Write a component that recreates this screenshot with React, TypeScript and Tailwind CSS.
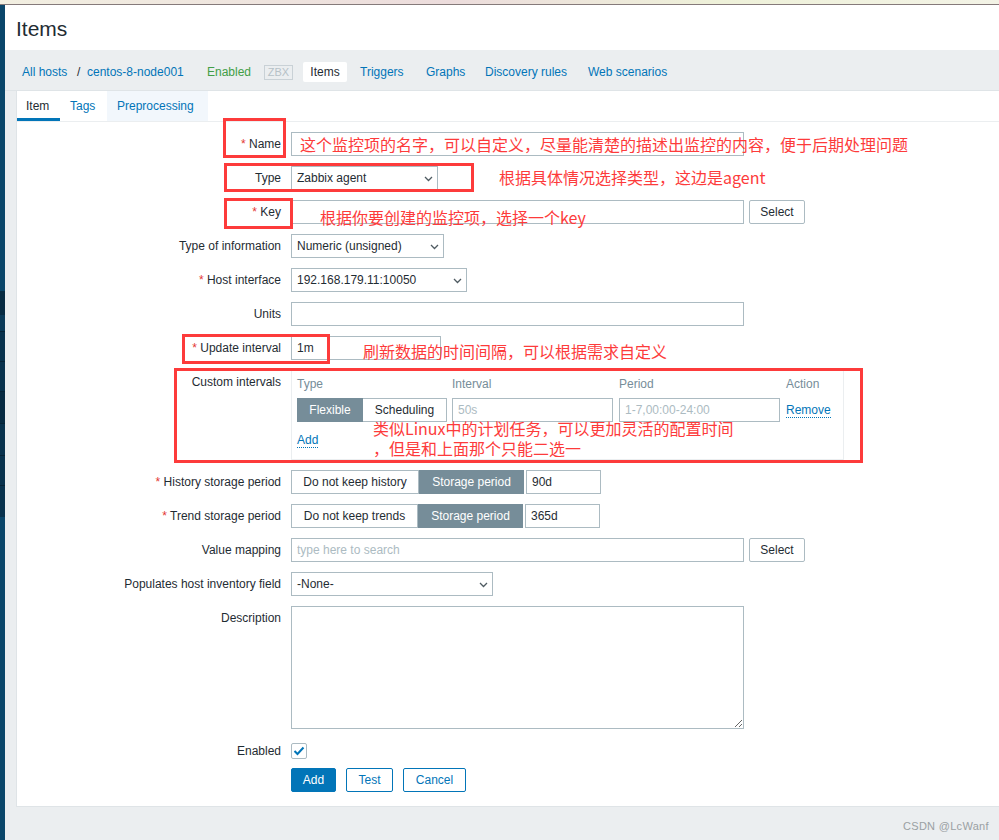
import React from 'react'

const RED = '#fd3b3b'

function Label({text, req}: {text: string, req?: boolean}) {
    return (
        <div className="w-[264px] shrink-0 h-6 leading-6 text-right">
            {req && <span className="text-[#e33734]">* </span>}
            {text}
        </div>
    )
}

function Row({label, req, children, className}: {label: string, req?: boolean, children?: React.ReactNode, className?: string}) {
    return (
        <div className={`flex items-start ${className ?? 'mb-[10px]'}`}>
            <Label text={label} req={req} />
            <div className="ml-[10px] flex items-start">{children}</div>
        </div>
    )
}

function Chevron() {
    return (
        <svg className="absolute right-[4px] top-[9px]" width="9" height="6" viewBox="0 0 9 6">
            <path d="M1 1 L4.5 4.5 L8 1" stroke="#4f5b62" strokeWidth="1.3" fill="none" />
        </svg>
    )
}

function Select({value, className}: {value: string, className: string}) {
    return (
        <div className={`relative h-6 border border-[#acbbc2] bg-white pl-[5px] leading-[22px] ${className}`}>
            {value}
            <Chevron />
        </div>
    )
}

function TextInput({value, placeholder, className}: {value?: string, placeholder?: string, className: string}) {
    return (
        <input
            readOnly
            defaultValue={value}
            placeholder={placeholder}
            className={`h-6 border border-[#acbbc2] bg-white px-[5px] outline-none placeholder:text-[#acbbc2] ${className}`}
        />
    )
}

function GreyButton({text}: {text: string}) {
    return (
        <div className="ml-[5px] w-[56px] h-6 leading-[22px] border border-[#acbbc2] bg-white rounded-[2px] text-center">
            {text}
        </div>
    )
}

export default function App() {
    return (
        <div className="relative w-[999px] h-[840px] overflow-hidden font-['Liberation_Sans',Arial,sans-serif] text-[12px] text-[#1f2c33]">
            <div className="h-[5px] border-b border-[#857a7a] bg-[linear-gradient(90deg,#f2efe1,#ecdcdc_45%,#eef1d9_72%,#f3f3e6)]" />
            <div className="flex h-[835px]">
                <div className="w-[5px] shrink-0 bg-[#0a466a] flex flex-col">
                    <div className="h-[286px]" />
                    <div className="h-[24px] bg-[#072b42]" />
                    <div className="h-[16px] bg-[#0a3a58]" />
                    <div className="h-[30px] bg-[#08324d] border-t border-[#052336]" />
                    <div className="h-[30px] bg-[#08324d] border-t border-[#052336]" />
                    <div className="h-[32px] bg-[#072b42] border-t border-[#052336]" />
                    <div className="h-[32px] bg-[#08324d] border-t border-[#052336]" />
                    <div className="h-[30px] bg-[#08324d] border-t border-[#052336]" />
                    <div className="h-[32px] bg-[#08324d] border-t border-[#052336]" />
                </div>
                <div className="flex-1 bg-[#ebeef0] flex flex-col">
                    <div className="h-[45px] bg-white pl-[11px] pt-[3px] flex items-center text-[21px]">Items</div>
                    <div className="h-[41px] border-b border-[#dfe4e7] flex items-center pl-[17px] pt-[4px] text-[#0275b8] whitespace-nowrap">
                        <span className="w-[55px] shrink-0">All hosts</span>
                        <span className="w-[10px] shrink-0 text-[#1f2c33]">/</span>
                        <span className="w-[120px] shrink-0">centos-8-node001</span>
                        <span className="w-[57px] shrink-0 text-[#429e47]">Enabled</span>
                        <span className="w-[29px] h-[15px] shrink-0 border border-[#c9d1d6] text-[#b6c1c7] text-[11px] leading-[13px] text-center">ZBX</span>
                        <span className="ml-[10px] w-[44px] h-[20px] leading-[20px] shrink-0 bg-white rounded-[2px] text-center text-[#1f2c33]">Items</span>
                        <span className="ml-[13px] w-[66px] shrink-0">Triggers</span>
                        <span className="w-[59px] shrink-0">Graphs</span>
                        <span className="w-[103px] shrink-0">Discovery rules</span>
                        <span>Web scenarios</span>
                    </div>
                    <div className="ml-[11px] h-[716px] bg-white border-l border-b border-[#dfe4e7] flex flex-col">
                        <div className="h-[31px] border-b border-[#ebeef0] flex whitespace-nowrap">
                            <div className="w-[43px] h-[30px] leading-[30px] pl-[9px] shadow-[inset_0_-3px_0_#0275b8]">Item</div>
                            <div className="w-[47px] h-[30px] leading-[30px] pl-[10px] text-[#0275b8]">Tags</div>
                            <div className="w-[101px] h-[30px] leading-[30px] pl-[10px] text-[#0275b8] bg-[#f2f7fc]">Preprocessing</div>
                        </div>
                        <div className="pt-[10px] flex flex-col">
                            <Row label="Name" req>
                                <TextInput className="w-[453px]" />
                            </Row>
                            <Row label="Type">
                                <Select value="Zabbix agent" className="w-[147px]" />
                            </Row>
                            <Row label="Key" req>
                                <TextInput className="w-[453px]" />
                                <GreyButton text="Select" />
                            </Row>
                            <Row label="Type of information">
                                <Select value="Numeric (unsigned)" className="w-[153px]" />
                            </Row>
                            <Row label="Host interface" req>
                                <Select value="192.168.179.11:10050" className="w-[176px]" />
                            </Row>
                            <Row label="Units">
                                <TextInput className="w-[453px]" />
                            </Row>
                            <Row label="Update interval" req>
                                <TextInput value="1m" className="w-[150px]" />
                            </Row>
                            <Row label="Custom intervals">
                                <div className="w-[553px] h-[90px] border border-[#ebeef0] px-[5px] pt-[5px]">
                                    <div className="flex h-[16px] leading-[16px] text-[#768d99]">
                                        <div className="w-[150px]">Type</div>
                                        <div className="ml-[5px] w-[161px]">Interval</div>
                                        <div className="ml-[6px] w-[161px]">Period</div>
                                        <div className="ml-[6px]">Action</div>
                                    </div>
                                    <div className="flex mt-[6px] h-6">
                                        <div className="w-[150px] flex">
                                            <div className="w-[66px] h-6 leading-[22px] text-center bg-[#768d99] border border-[#768d99] text-white">Flexible</div>
                                            <div className="w-[84px] h-6 leading-[22px] text-center border border-l-0 border-[#acbbc2]">Scheduling</div>
                                        </div>
                                        <TextInput placeholder="50s" className="ml-[5px] w-[161px]" />
                                        <TextInput placeholder="1-7,00:00-24:00" className="ml-[6px] w-[161px]" />
                                        <div className="ml-[6px] h-6 leading-6 text-[#0275b8]">
                                            <span className="border-b border-dotted border-[#0275b8]">Remove</span>
                                        </div>
                                    </div>
                                    <div className="mt-[10px] h-[16px] leading-[16px] text-[#0275b8]">
                                        <span className="border-b border-dotted border-[#0275b8]">Add</span>
                                    </div>
                                </div>
                            </Row>
                            <Row label="History storage period" req>
                                <div className="flex">
                                    <div className="w-[128px] h-6 leading-[22px] text-center border border-[#acbbc2]">Do not keep history</div>
                                    <div className="w-[105px] h-6 leading-[22px] text-center bg-[#768d99] border border-[#768d99] text-white">Storage period</div>
                                </div>
                                <TextInput value="90d" className="ml-[2px] w-[75px]" />
                            </Row>
                            <Row label="Trend storage period" req>
                                <div className="flex">
                                    <div className="w-[127px] h-6 leading-[22px] text-center border border-[#acbbc2]">Do not keep trends</div>
                                    <div className="w-[105px] h-6 leading-[22px] text-center bg-[#768d99] border border-[#768d99] text-white">Storage period</div>
                                </div>
                                <TextInput value="365d" className="ml-[2px] w-[75px]" />
                            </Row>
                            <Row label="Value mapping">
                                <TextInput placeholder="type here to search" className="w-[453px]" />
                                <GreyButton text="Select" />
                            </Row>
                            <Row label="Populates host inventory field">
                                <Select value="-None-" className="w-[202px]" />
                            </Row>
                            <Row label="Description">
                                <textarea readOnly className="w-[453px] h-[123px] border border-[#acbbc2] bg-white outline-none block" />
                            </Row>
                            <Row label="Enabled" className="mb-[5px]">
                                <div className="h-6 flex items-center">
                                    <div className="w-4 h-4 border border-[#acbbc2] rounded-[2px] bg-white flex items-center justify-center">
                                        <svg width="12" height="10" viewBox="0 0 12 10">
                                            <path d="M1.5 5 L4.5 8 L10.5 1.5" stroke="#0275b8" strokeWidth="2" fill="none" />
                                        </svg>
                                    </div>
                                </div>
                            </Row>
                            <div className="flex pl-[274px]">
                                <div className="w-[45px] h-6 leading-[22px] text-center bg-[#0275b8] border border-[#0275b8] text-white rounded-[2px]">Add</div>
                                <div className="ml-[10px] w-[47px] h-6 leading-[22px] text-center border border-[#0275b8] text-[#0275b8] rounded-[2px]">Test</div>
                                <div className="ml-[10px] w-[63px] h-6 leading-[22px] text-center border border-[#0275b8] text-[#0275b8] rounded-[2px]">Cancel</div>
                            </div>
                        </div>
                    </div>
                </div>
            </div>

            {/* annotations drawn over the screenshot */}
            <div className="absolute left-[223px] top-[118px] w-[63px] h-[40px] border-[3px] border-[#fd3b3b]" />
            <div className="absolute left-[224px] top-[163px] w-[250px] h-[29px] border-[3px] border-[#fd3b3b]" />
            <div className="absolute left-[224px] top-[198px] w-[69px] h-[31px] border-[3px] border-[#fd3b3b]" />
            <div className="absolute left-[182px] top-[334px] w-[148px] h-[30px] border-[3px] border-[#fd3b3b]" />
            <div className="absolute left-[174px] top-[368px] w-[689px] h-[95px] border-[3px] border-[#fd3b3b]" />

            <div className="absolute inset-0 pointer-events-none font-['Noto_Sans_CJK_SC',sans-serif] text-[16px] leading-[20px] whitespace-nowrap" style={{color: RED}}>
                <div className="absolute left-[300px] top-[134px]">这个监控项的名字，可以自定义，尽量能清楚的描述出监控的内容，便于后期处理问题</div>
                <div className="absolute left-[499px] top-[167px]">根据具体情况选择类型，这边是agent</div>
                <div className="absolute left-[320px] top-[207px]">根据你要创建的监控项，选择一个key</div>
                <div className="absolute left-[363px] top-[341px]">刷新数据的时间间隔，可以根据需求自定义</div>
                <div className="absolute left-[373px] top-[418px]">类似Linux中的计划任务，可以更加灵活的配置时间</div>
                <div className="absolute left-[373px] top-[438px]">，但是和上面那个只能二选一</div>
            </div>

            <div className="absolute left-[903px] top-[819px] text-[11px] leading-[14px] text-[#9aa0a3] tracking-[0.3px]">CSDN @LcWanf</div>
        </div>
    )
}
